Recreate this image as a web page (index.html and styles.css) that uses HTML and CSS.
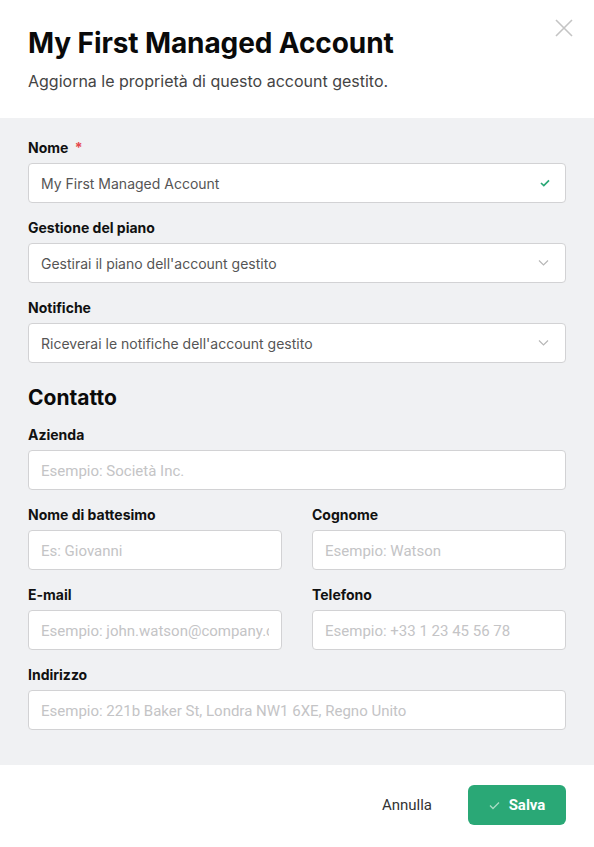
FILE: index.html
```html
<!DOCTYPE html>
<html lang="it">
<head>
<meta charset="utf-8">
<title>My First Managed Account</title>
<link rel="stylesheet" href="styles.css">
</head>
<body>
<div class="modal">
  <header class="modal-head">
    <h1 class="title">My First Managed Account</h1>
    <p class="subtitle">Aggiorna le proprietà di questo account gestito.</p>
    <button class="close" aria-label="Chiudi">
      <svg width="18" height="18" viewBox="0 0 18 18"><path d="M1 1L17 17M17 1L1 17" stroke="#c4c4c4" stroke-width="1.6" fill="none"/></svg>
    </button>
  </header>

  <form class="modal-body">
    <div class="field">
      <label class="label">Nome <span class="req">*</span></label>
      <div class="control">
        <input class="input" value="My First Managed Account">
        <svg class="icon" width="10" height="8" viewBox="0 0 10 8"><path d="M1 4L3.8 6.6L9 1.4" stroke="#2aa876" stroke-width="1.7" fill="none"/></svg>
      </div>
    </div>

    <div class="field">
      <label class="label">Gestione del piano</label>
      <div class="control select">
        <span class="value">Gestirai il piano dell'account gestito</span>
        <svg class="icon" width="11" height="7" viewBox="0 0 11 7"><path d="M1 1L5.5 5.5L10 1" stroke="#b8b8b8" stroke-width="1.2" fill="none"/></svg>
      </div>
    </div>

    <div class="field">
      <label class="label">Notifiche</label>
      <div class="control select">
        <span class="value">Riceverai le notifiche dell'account gestito</span>
        <svg class="icon" width="11" height="7" viewBox="0 0 11 7"><path d="M1 1L5.5 5.5L10 1" stroke="#b8b8b8" stroke-width="1.2" fill="none"/></svg>
      </div>
    </div>

    <h2 class="section">Contatto</h2>

    <div class="field">
      <label class="label">Azienda</label>
      <input class="input" placeholder="Esempio: Società Inc.">
    </div>

    <div class="row">
      <div class="field">
        <label class="label">Nome di battesimo</label>
        <input class="input" placeholder="Es: Giovanni">
      </div>
      <div class="field">
        <label class="label">Cognome</label>
        <input class="input" placeholder="Esempio: Watson">
      </div>
    </div>

    <div class="row">
      <div class="field">
        <label class="label">E-mail</label>
        <input class="input" placeholder="Esempio: john.watson@company.com">
      </div>
      <div class="field">
        <label class="label">Telefono</label>
        <input class="input" placeholder="Esempio: +33 1 23 45 56 78">
      </div>
    </div>

    <div class="field last">
      <label class="label">Indirizzo</label>
      <input class="input" placeholder="Esempio: 221b Baker St, Londra NW1 6XE, Regno Unito">
    </div>
  </form>

  <footer class="modal-foot">
    <button class="btn-link" type="button">Annulla</button>
    <button class="btn-primary" type="button">
      <svg width="11" height="9" viewBox="0 0 11 9"><path d="M1 4.5L4 7.5L10 1.5" stroke="#a8dcc3" stroke-width="1.3" fill="none"/></svg>
      Salva
    </button>
  </footer>
</div>
</body>
</html>
```

FILE: styles.css
```css
* { box-sizing: border-box; }

html, body {
  margin: 0;
  padding: 0;
  background: #ffffff;
}

body {
  font-family: Inter, "Noto Sans", sans-serif;
  color: #111;
}

.modal {
  width: 594px;
  min-height: 847px;
  display: flex;
  flex-direction: column;
}

.modal-head {
  position: relative;
  height: 118px;
  padding: 26px 28px 0;
}

.title {
  margin: 0;
  font-size: 28px;
  line-height: 34px;
  font-weight: 700;
  color: #0a0a0a;
  letter-spacing: -0.1px;
}

.subtitle {
  margin: 9px 0 0;
  font-size: 16px;
  line-height: 24px;
  color: #444;
}

.close {
  position: absolute;
  top: 19px;
  right: 21px;
  padding: 0;
  border: 0;
  background: none;
  width: 18px;
  height: 18px;
}

.modal-body {
  margin: 0;
  background: #f0f1f3;
  padding: 20px 28px 35px;
  display: flex;
  flex-direction: column;
}

.field {
  display: flex;
  flex-direction: column;
  margin-bottom: 15px;
  min-width: 0;
}

.field.last { margin-bottom: 0; }

.label {
  font-size: 14px;
  line-height: 20px;
  font-weight: 700;
  color: #111;
  margin-bottom: 5px;
}

.req {
  color: #e5484d;
  margin-left: 3px;
}

.control {
  position: relative;
}

.input,
.select {
  width: 100%;
  height: 40px;
  border: 1px solid #d2d2d4;
  border-radius: 4px;
  background: #fff;
  padding: 0 12px;
  font-family: Inter, "Noto Sans", sans-serif;
  font-size: 14px;
  color: #555;
  outline: none;
}

.input::placeholder {
  font-family: Roboto, sans-serif;
  font-size: 15px;
  color: #c4c4c6;
}

.select {
  display: flex;
  align-items: center;
}

.control .icon {
  position: absolute;
  right: 16px;
  top: 50%;
  transform: translateY(-50%);
}

.row {
  display: grid;
  grid-template-columns: 1fr 1fr;
  column-gap: 30px;
}

.section {
  margin: 6px 0 13px;
  font-size: 21px;
  line-height: 28px;
  font-weight: 700;
  color: #0a0a0a;
}

.modal-foot {
  display: flex;
  justify-content: flex-end;
  align-items: center;
  gap: 36px;
  padding: 20px 28px 22px;
}

.btn-link {
  border: 0;
  background: none;
  font-family: Roboto, sans-serif;
  font-size: 15px;
  color: #333;
  padding: 0;
}

.btn-primary {
  display: flex;
  align-items: center;
  justify-content: center;
  gap: 9px;
  width: 98px;
  height: 40px;
  border: 0;
  border-radius: 6px;
  background: #2aa876;
  color: #fff;
  font-family: Roboto, sans-serif;
  font-weight: 700;
  font-size: 15px;
}
```
